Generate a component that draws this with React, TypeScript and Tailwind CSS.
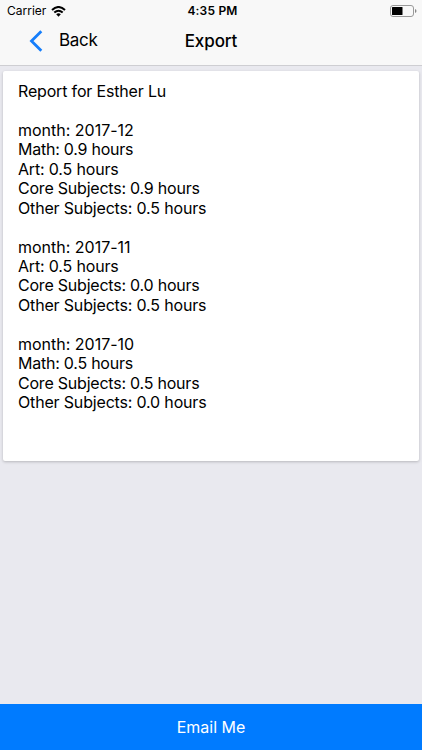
const report = [
  'Report for Esther Lu', '',
  'month: 2017-12', 'Math: 0.9 hours', 'Art: 0.5 hours', 'Core Subjects: 0.9 hours', 'Other Subjects: 0.5 hours', '',
  'month: 2017-11', 'Art: 0.5 hours', 'Core Subjects: 0.0 hours', 'Other Subjects: 0.5 hours', '',
  'month: 2017-10', 'Math: 0.5 hours', 'Core Subjects: 0.5 hours', 'Other Subjects: 0.0 hours',
];

export default function App() {
  return (
    <div className="flex h-[750px] w-[422px] flex-col overflow-hidden bg-[#e9e9ef] font-['Inter',sans-serif] text-black">
      <header className="h-[66px] shrink-0 border-b border-[#ceced2] bg-[#f8f8f8]">
        <div className="grid h-[22px] grid-cols-3 items-center pl-[7px] pr-[5px] text-[12px]">
          <div className="flex items-center gap-[5px]">
            <span>Carrier</span>
            <svg width="15" height="11" viewBox="0 0 15 11" fill="none" stroke="black" strokeWidth="2">
              <path d="M1 4Q7.5 -2 14 4M3.3 6.6Q7.5 2.8 11.7 6.6" />
              <path d="M5.2 8.3Q7.5 6.3 9.8 8.3L7.5 10.7Z" fill="black" stroke="none" />
            </svg>
          </div>
          <span className="pl-[1px] text-center font-semibold tracking-[0.2px]">4:35 PM</span>
          <svg className="justify-self-end" width="27" height="12" viewBox="0 0 27 12">
            <rect x=".5" y=".5" width="23" height="11" rx="2.5" fill="none" stroke="#999" />
            <rect x="2" y="2" width="10.5" height="8" rx=".5" />
            <path d="M25 4Q26.5 4.5 26.5 6T25 8Z" fill="#888" />
          </svg>
        </div>
        <div className="grid h-[38px] grid-cols-3 items-center text-[17px]">
          <div className="flex items-center pl-[29px]">
            <svg width="14" height="22" viewBox="0 0 14 22" fill="none" stroke="#157efb" strokeWidth="2.8"><path d="M12.3 1.3L2.5 11L12.3 20.7" /></svg>
            <span className="ml-4 tracking-[-0.3px]">Back</span>
          </div>
          <h1 className="pt-[2px] text-center font-medium tracking-[-0.1px]">Export</h1>
        </div>
      </header>
      <main className="flex-1 px-[3px] pt-[5px]">
        <section className="h-[390px] rounded-[2px] bg-white px-[15px] pt-[11px] text-[16px] leading-[19.45px] shadow-[0_1px_3px_rgba(0,0,0,0.22)]">
          {report.map((line, i) => (
            <div key={i} className={`h-[19.45px] whitespace-nowrap ${line.startsWith('month') ? 'tracking-[-0.01px]' : line.startsWith('Math') ? 'tracking-[-0.24px]' : line.startsWith('Core') ? 'tracking-[-0.22px]' : 'tracking-[-0.17px]'}`}>{line}</div>
          ))}
        </section>
      </main>
      <button className="h-[46px] shrink-0 bg-[#007bff] pb-[1px] text-[16px] text-white">Email Me</button>
    </div>
  );
}
